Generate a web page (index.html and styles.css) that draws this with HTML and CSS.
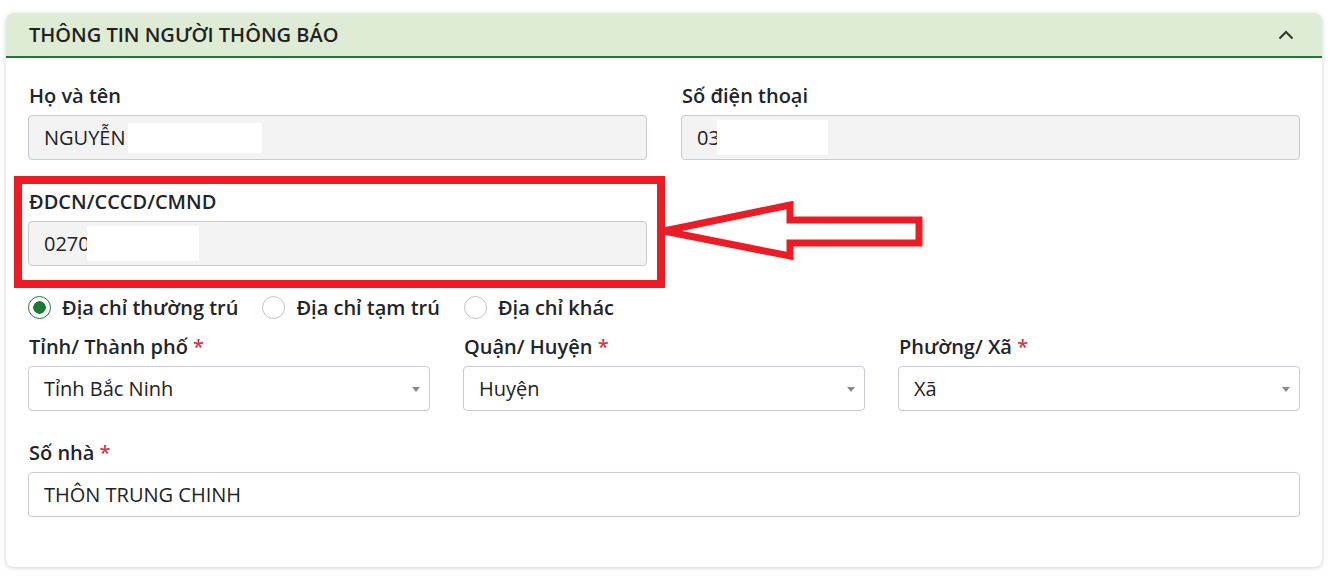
FILE: index.html
```html
<!DOCTYPE html>
<html lang="vi">
<head>
    <meta charset="UTF-8">
    <meta name="viewport" content="width=device-width, initial-scale=1.0">
    <title>Thông tin người thông báo</title>
    <link rel="stylesheet" href="styles.css">
</head>
<body>
    <div class="card">
        <div class="card-header">
            <span class="card-title">THÔNG TIN NGƯỜI THÔNG BÁO</span>
            <svg class="chevron" width="16" height="10" viewBox="0 0 16 10">
                <path d="M1.5 8.5 L8 2 L14.5 8.5" fill="none" stroke="#333" stroke-width="2"/>
            </svg>
        </div>

        <div class="card-body">
            <div class="row two">
                <div class="field">
                    <label>Họ và tên</label>
                    <div class="control readonly">NGUYỄN<span class="mask mask-name"></span></div>
                </div>
                <div class="field">
                    <label>Số điện thoại</label>
                    <div class="control readonly">03<span class="mask mask-phone"></span></div>
                </div>
            </div>

            <div class="row two">
                <div class="field">
                    <label>ĐDCN/CCCD/CMND</label>
                    <div class="control readonly">0270<span class="mask mask-id"></span></div>
                </div>
            </div>

            <div class="radios">
                <label class="radio"><span class="dot checked"></span>Địa chỉ thường trú</label>
                <label class="radio"><span class="dot"></span>Địa chỉ tạm trú</label>
                <label class="radio"><span class="dot"></span>Địa chỉ khác</label>
            </div>

            <div class="row three">
                <div class="field">
                    <label>Tỉnh/ Thành phố <span class="req">*</span></label>
                    <div class="control select">Tỉnh Bắc Ninh<span class="caret"></span></div>
                </div>
                <div class="field">
                    <label>Quận/ Huyện <span class="req">*</span></label>
                    <div class="control select">Huyện<span class="caret"></span></div>
                </div>
                <div class="field">
                    <label>Phường/ Xã <span class="req">*</span></label>
                    <div class="control select">Xã<span class="caret"></span></div>
                </div>
            </div>

            <div class="row one">
                <div class="field">
                    <label>Số nhà <span class="req">*</span></label>
                    <div class="control">THÔN TRUNG CHINH</div>
                </div>
            </div>
        </div>

        <!-- khung đánh dấu + mũi tên -->
        <div class="highlight"></div>
        <svg class="arrow" width="270" height="60" viewBox="0 0 270 60">
            <path d="M6 30 L132 4 L132 19 L261 19 L261 42 L132 42 L132 55 Z"
                  fill="none" stroke="#ed1c24" stroke-width="7" stroke-linejoin="miter"/>
        </svg>
    </div>
</body>
</html>
```

FILE: styles.css
```css
body {
    margin: 0;
    padding: 13px 12px 20px 6px;
    background: #ffffff;
    font-family: "Open Sans", "Noto Sans", Arial, sans-serif;
    color: #212529;
}

.card {
    position: relative;
    width: 1316px;
    background: #ffffff;
    border-radius: 8px;
    box-shadow: 0 1px 5px rgba(0, 0, 0, 0.18);
}

.card-header {
    display: flex;
    align-items: center;
    justify-content: space-between;
    height: 43px;
    padding: 0 28px 0 23px;
    background: #dfecd5;
    border-bottom: 2px solid #1f7a34;
    border-radius: 8px 8px 0 0;
}

.card-title {
    font-size: 20px;
    font-weight: 600;
    color: #222;
}

.card-body {
    padding: 26px 22px 50px 22px;
}

.row {
    display: grid;
    margin-bottom: 30px;
}

.row.two {
    grid-template-columns: 619px 619px;
    column-gap: 34px;
}

.row.three {
    grid-template-columns: 402px 402px 402px;
    column-gap: 33px;
}

.row.one {
    grid-template-columns: 1fr;
    margin-bottom: 0;
}

.field label {
    display: block;
    font-size: 20px;
    font-weight: 600;
    line-height: 24px;
    margin-bottom: 7px;
    padding-left: 1px;
}

.req {
    color: #dc3545;
}

.control {
    position: relative;
    display: flex;
    align-items: center;
    box-sizing: border-box;
    height: 45px;
    padding: 0 15px;
    border: 1px solid #c9c8d3;
    border-radius: 4px;
    background: #ffffff;
    font-size: 20px;
    color: #222;
}

.control.readonly {
    background: #f3f3f3;
}

.mask {
    display: inline-block;
    background: #ffffff;
}

.mask-name {
    width: 134px;
    height: 30px;
    margin-left: 2px;
}

.mask-phone {
    width: 111px;
    height: 35px;
    margin-left: -3px;
}

.mask-id {
    width: 112px;
    height: 35px;
    margin-left: -3px;
}

.select .caret {
    position: absolute;
    right: 9px;
    top: 20px;
    width: 0;
    height: 0;
    border-left: 4px solid transparent;
    border-right: 4px solid transparent;
    border-top: 5px solid #888;
}

.radios {
    display: flex;
    align-items: center;
    height: 28px;
    margin: -3px 0 14px 0;
}

.radio {
    display: flex;
    align-items: center;
    font-size: 20px;
    font-weight: 600;
    margin-right: 24px;
}

.dot {
    box-sizing: border-box;
    width: 23px;
    height: 23px;
    margin-right: 11px;
    border: 1px solid #c2c2c2;
    border-radius: 50%;
    background: #fff;
}

.dot.checked {
    border: 1.5px solid #1f7a34;
    background: radial-gradient(circle, #1f7a34 0, #1f7a34 6px, #fff 6.5px);
}

.highlight {
    position: absolute;
    left: 8px;
    top: 163px;
    width: 651px;
    height: 112px;
    box-sizing: border-box;
    border: 8px solid #ed1c24;
}

.arrow {
    position: absolute;
    left: 652px;
    top: 188px;
}
```
